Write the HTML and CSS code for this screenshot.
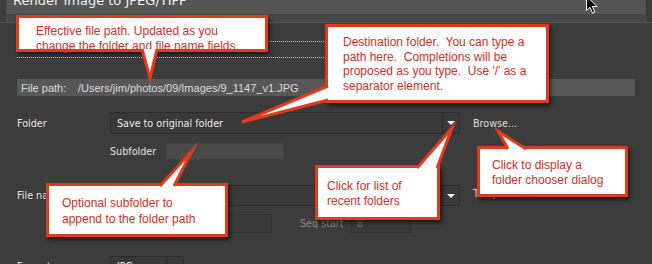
FILE: index.html
```html
<!DOCTYPE html>
<html lang="en">
<head>
    <meta charset="UTF-8">
    <meta name="viewport" content="width=device-width, initial-scale=1.0">
    <title>Render Image to JPEG/TIFF</title>
    <link rel="stylesheet" href="styles.css">
</head>
<body>

    <div class="header">
        <div class="header-inner">
            <div class="title"><span>Render Image to JPEG/TIFF</span></div>
            <div class="subbar"></div>
        </div>
    </div>

    <div class="panel">
        <!-- vista previa del nombre -->
        <div class="dots"></div>
        <div class="dots second"></div>

        <div class="file-path">
            <span class="file-path-key">File path:</span>
            <span>/Users/jim/photos/09/Images/9_1147_v1.JPG</span>
        </div>

        <div class="row row-folder">
            <div class="label">Folder</div>
            <div class="select">
                <div class="select-value">Save to original folder</div>
                <div class="select-arrow"><span class="tri"></span></div>
            </div>
            <div class="link">Browse...</div>
        </div>

        <div class="row row-sub">
            <div class="label"></div>
            <div class="sub-label">Subfolder</div>
            <div class="field field-sub"></div>
        </div>

        <div class="row row-name">
            <div class="label">File name</div>
            <div class="select select-name">
                <div class="select-value"></div>
                <div class="select-arrow"><span class="tri"></span></div>
            </div>
            <div class="link link-template">Template</div>
        </div>

        <div class="row row-seq">
            <div class="label"></div>
            <div class="field field-off field-text"></div>
            <div class="seq-label">Seq start</div>
            <div class="field field-off field-seq">8</div>
        </div>

        <div class="row row-format">
            <div class="label">Format</div>
            <div class="select select-format">
                <div class="select-value">JPG</div>
                <div class="select-arrow"><span class="tri"></span></div>
            </div>
        </div>
    </div>

    <!-- Globos de ayuda -->
    <div class="callout callout-path">Effective file path. Updated as you<br>change the folder and file name fields.</div>
    <div class="callout callout-dest">Destination folder.&nbsp; You can type a<br>path here.&nbsp; Completions will be<br>proposed as you type.&nbsp; Use '/' as a<br>separator element.</div>
    <div class="callout callout-recent">Click for list of<br>recent folders</div>
    <div class="callout callout-browse">Click to display a<br>folder chooser dialog</div>
    <div class="callout callout-sub">Optional subfolder to<br>append to the folder path</div>

    <svg class="tails" width="652" height="264" viewBox="0 0 652 264">
        <path d="M142 49 L150 78 L157 49"/>
        <path d="M328 86 L242 122 L328 100"/>
        <path d="M417 168 L452 128 L437 168"/>
        <path d="M508 149 L498 131 L526 149"/>
        <path d="M160 186 L192 151 L174 186"/>
    </svg>

    <svg class="cursor" width="14" height="20" viewBox="0 0 14 20">
        <path d="M1.5 1 L1.5 15.5 L5 12.3 L7.6 18.2 L9.8 17.2 L7.3 11.5 L12 11.5 Z"/>
    </svg>

</body>
</html>
```

FILE: styles.css
```css
body {
    margin: 0;
    width: 652px;
    height: 264px;
    overflow: hidden;
    position: relative;
    background-color: #3c3c3c;
    font-family: 'DejaVu Sans', sans-serif;
    font-size: 9.6px;
    color: #e4e4e4;
}

.header {
    padding: 0 6px;
    border-bottom: 1px solid #555;
}

.header-inner {
    border-left: 1px solid #4e4e4e;
    border-right: 1px solid #4e4e4e;
}

.title {
    height: 14px;
    overflow: hidden;
    background-color: #565656;
    color: #f2f2f2;
    font-size: 13px;
    padding-left: 6px;
}

.title span {
    display: block;
    line-height: 14px;
    margin-top: -6px;
}

.subbar {
    height: 8px;
    background-color: #464646;
}

.panel {
    padding: 0 17px;
}

.dots {
    width: 423px;
    margin-top: 18px;
    border-top: 1px dotted #c6c6c6;
}

.dots.second {
    margin-top: 15px;
}

.file-path {
    margin-top: 21px;
    height: 17px;
    display: flex;
    align-items: center;
    padding-left: 4px;
    background-color: #575757;
    font-family: 'Liberation Sans', Arial, sans-serif;
    font-size: 11px;
    color: #dcdcdc;
}

.file-path-key {
    width: 57px;
}

.row {
    display: flex;
    align-items: center;
}

.label {
    width: 93px;
    flex: none;
    color: #e6e6e6;
}

.row-folder {
    margin-top: 16px;
    height: 22px;
}

.row-sub {
    margin-top: 9px;
    height: 17px;
}

.row-name {
    margin-top: 25px;
    height: 21px;
}

.row-seq {
    margin-top: 8px;
    height: 19px;
}

.row-format {
    margin-top: 23px;
    height: 20px;
}

.select {
    width: 350px;
    height: 100%;
    box-sizing: border-box;
    display: flex;
    background-color: #393939;
    border: 1px solid #2b2b2b;
}

.select-value {
    flex-grow: 1;
    padding-left: 6px;
    display: flex;
    align-items: center;
    color: #ececec;
}

.select-arrow {
    width: 16px;
    border-left: 1px solid #2b2b2b;
    display: flex;
    align-items: center;
    justify-content: center;
}

.tri {
    width: 0;
    height: 0;
    border-left: 4px solid transparent;
    border-right: 4px solid transparent;
    border-top: 4px solid #eee;
}

.select-format {
    width: 74px;
}

.link {
    margin-left: 13px;
    color: #dedede;
}

.link-template {
    margin-bottom: 5px;
}

.sub-label {
    width: 56px;
    color: #e2e2e2;
}

.field {
    height: 100%;
    box-sizing: border-box;
}

.field-sub {
    width: 118px;
    background-color: #4a4a4a;
    border: 1px solid #414141;
}

.field-off {
    border: 1px solid #313131;
    background-color: #3a3a3a;
    color: #777;
    padding-left: 5px;
    line-height: 17px;
}

.field-text {
    margin-left: 56px;
    width: 106px;
}

.seq-label {
    margin-left: 28px;
    width: 51px;
    color: #8a8a8a;
}

.field-seq {
    width: 60px;
}

/* Globos rojos */
.callout {
    position: absolute;
    box-sizing: border-box;
    background-color: #fff;
    border: 3px solid #e5391d;
    box-shadow: 2px 3px 4px rgba(0, 0, 0, 0.55);
    color: #d52f1f;
    font-family: 'Liberation Sans', Arial, sans-serif;
    font-size: 12px;
    line-height: 14.5px;
    white-space: nowrap;
}

.callout-path {
    left: 16px;
    top: 15px;
    width: 252px;
    height: 37px;
    padding: 6px 0 0 17px;
}

.callout-dest {
    left: 325px;
    top: 24px;
    width: 224px;
    height: 79px;
    padding: 8px 0 0 15px;
}

.callout-recent {
    left: 315px;
    top: 165px;
    width: 125px;
    height: 55px;
    padding: 11px 0 0 9px;
}

.callout-browse {
    left: 477px;
    top: 146px;
    width: 151px;
    height: 51px;
    padding: 9px 0 0 12px;
}

.callout-sub {
    left: 46px;
    top: 183px;
    width: 182px;
    height: 54px;
    padding: 10px 0 0 13px;
    line-height: 15.5px;
}

.tails {
    position: absolute;
    left: 0;
    top: 0;
    pointer-events: none;
}

.tails path {
    fill: #fff;
    stroke: #e5391d;
    stroke-width: 3;
    stroke-linejoin: miter;
    stroke-miterlimit: 10;
}

.cursor {
    position: absolute;
    left: 585px;
    top: -5px;
}

.cursor path {
    fill: #000;
    stroke: #fff;
    stroke-width: 1;
}
```
